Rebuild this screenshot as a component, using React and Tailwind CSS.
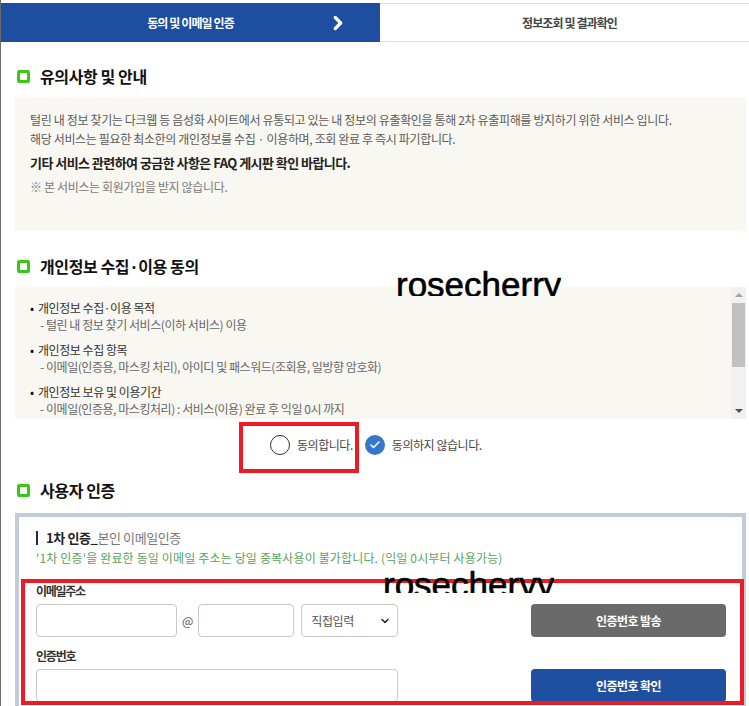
import { Check, ChevronRight, ChevronDown } from 'lucide-react';

const FONT = { fontFamily: '"Noto Sans CJK KR", "Noto Sans", sans-serif' };
const MARK = { fontFamily: '"Liberation Sans", Arial, sans-serif' };

// section heading with green square
const SectionTitle = ({ children, className = '' }) => (
  <div className={`flex items-center h-[22px] pl-[2px] ${className}`}>
    <span className="w-[13px] h-[13px] border-[3px] border-[#3dc51a] rounded-[2px]" />
    <h2 className="ml-[10px] text-[16px] font-bold text-[#111] tracking-[-0.4px]">{children}</h2>
  </div>
);

const consentItems = [
  { title: '개인정보 수집·이용 목적', lines: ['- 털린 내 정보 찾기 서비스(이하 서비스) 이용'] },
  { title: '개인정보 수집 항목', lines: ['- 이메일(인증용, 마스킹 처리), 아이디 및 패스워드(조회용, 일방향 암호화)'] },
  {
    title: '개인정보 보유 및 이용기간',
    lines: ['- 이메일(인증용, 마스킹처리) : 서비스(이용) 완료 후 익일 0시 까지', '- 아이디 및 패스워드(조회용, 일방향 암호화) : 조회 완료 후 즉시 파기'],
  },
  { title: '동의 거부 권리', lines: ['- 동의를 거부할 수 있으며, 거부 시 서비스 이용이 제한됩니다.'] },
];

export default function App() {
  return (
    <div className="relative w-[749px] min-h-[706px] bg-white border-l border-[#6b6b6b] overflow-hidden" style={FONT}>
      {/* Steps */}
      <div className="pt-[3px]">
        <div className="flex h-[39px]">
          <div className="w-[379px] bg-[#1e4e9f] flex items-center justify-center relative">
            <span className="text-white text-[12px] font-bold tracking-[-0.9px]">동의 및 이메일 인증</span>
            <ChevronRight className="absolute left-[326px] top-[9px] w-[22px] h-[22px] text-white" strokeWidth={3.5} />
          </div>
          <div className="flex-1 flex items-center justify-center pl-[10px] border-y border-[#dedede]">
            <span className="text-[#444] text-[12px] font-bold tracking-[-0.9px]">정보조회 및 결과확인</span>
          </div>
        </div>
      </div>

      <div className="pl-[14px] pr-[3px]">
        <SectionTitle className="mt-[23px]">유의사항 및 안내</SectionTitle>
        <div className="mt-[10px] h-[134px] bg-[#f9f7f1] pl-[15px] pt-[13px] text-[12px] leading-[19px] tracking-[-0.35px] text-[#5a5a5a]">
          <p>털린 내 정보 찾기는 다크웹 등 음성화 사이트에서 유통되고 있는 내 정보의 유출확인을 통해 2차 유출피해를 방지하기 위한 서비스 입니다.</p>
          <p>해당 서비스는 필요한 최소한의 개인정보를 수집 · 이용하며, 조회 완료 후 즉시 파기합니다.</p>
          <p className="mt-[5px] text-[13px] font-bold text-[#222] tracking-[-0.55px]">기타 서비스 관련하여 궁금한 사항은 FAQ 게시판 확인 바랍니다.</p>
          <p className="mt-[5px] text-[#7a7a7a]">※ 본 서비스는 회원가입을 받지 않습니다.</p>
        </div>

        <SectionTitle className="mt-[24px]">개인정보 수집·이용 동의</SectionTitle>
        <div className="mt-[10px] h-[132px] bg-[#f9f7f1] flex">
          <div className="flex-1 overflow-hidden pl-[15px] pt-[12px] text-[12px] leading-[17px] tracking-[-0.45px]">
            {consentItems.map((item, i) => (
              <div key={i} className={i > 0 ? 'mt-[8px]' : ''}>
                <div className="flex text-[#333]">
                  <span className="w-[8px] text-[#111]">•</span>
                  <span>{item.title}</span>
                </div>
                {item.lines.map((l, j) => (
                  <p key={j} className="pl-[10px] text-[#666]">{l}</p>
                ))}
              </div>
            ))}
          </div>
          {/* scrollbar */}
          <div className="w-[15px] bg-[#f1f1f1] flex flex-col items-center">
            <div className="h-[16px] flex items-center justify-center">
              <span className="w-0 h-0 border-x-[4px] border-x-transparent border-b-[4px] border-b-[#a3a3a3]" />
            </div>
            <div className="w-[13px] h-[64px] bg-[#c1c1c1]" />
            <div className="flex-1" />
            <div className="h-[16px] flex items-center justify-center">
              <span className="w-0 h-0 border-x-[4px] border-x-transparent border-t-[4px] border-t-[#505050]" />
            </div>
          </div>
        </div>

        {/* agree radios */}
        <div className="mt-[16px] h-[20px] flex items-center pl-[255px] text-[12px] tracking-[-0.45px] text-[#444]">
          <span className="w-[20px] h-[20px] rounded-full border-[1.5px] border-[#333] bg-white" />
          <span className="ml-[7px]">동의합니다.</span>
          <span className="ml-[12px] w-[20px] h-[20px] rounded-full bg-[#3677cc] flex items-center justify-center">
            <Check className="w-[12px] h-[12px] text-white" strokeWidth={3} />
          </span>
          <span className="ml-[7px]">동의하지 않습니다.</span>
        </div>

        <SectionTitle className="mt-[24px]">사용자 인증</SectionTitle>
        <div className="mt-[12px] border-[4px] border-[#c3cbdb] border-b-0 pl-[17px] pr-[16px] pt-[12px] pb-[10px]">
          <div className="flex items-center h-[18px]">
            <span className="w-[2px] h-[14px] bg-[#1b2a55]" />
            <span className="ml-[8px] text-[13px] font-bold text-[#222] tracking-[-0.4px]">1차 인증_</span>
            <span className="text-[13px] text-[#777] tracking-[-0.4px]">본인 이메일인증</span>
          </div>
          <p className="mt-[2px] text-[12px] leading-[18px] text-[#5aa25a] tracking-[0.15px]">'1차 인증'을 완료한 동일 이메일 주소는 당일 중복사용이 불가합니다. (익일 0시부터 사용가능)</p>

          <p className="mt-[15px] text-[12px] font-bold text-[#333] tracking-[-1.3px] leading-[18px]">이메일주소</p>
          <div className="mt-[4px] flex items-center h-[33px]">
            <input className="w-[141px] h-[33px] border border-[#c8c8c8] rounded-[4px] bg-white" />
            <span className="mx-[5px] text-[12px] text-[#555]">@</span>
            <input className="w-[96px] h-[33px] border border-[#c8c8c8] rounded-[4px] bg-white" />
            <div className="ml-[7px] w-[97px] h-[33px] border border-[#c8c8c8] rounded-[4px] flex items-center justify-between pl-[9px] pr-[6px] text-[12px] text-[#555] tracking-[-0.45px]">
              <span>직접입력</span>
              <ChevronDown className="w-[12px] h-[12px] text-[#222]" strokeWidth={3} />
            </div>
            <button className="ml-auto w-[195px] h-[33px] rounded-[4px] bg-[#6a6a6a] text-white text-[12px] font-bold tracking-[-0.55px]">인증번호 발송</button>
          </div>

          <p className="mt-[10px] text-[12px] font-bold text-[#333] tracking-[-1.2px] leading-[18px]">인증번호</p>
          <div className="mt-[4px] flex items-center h-[33px]">
            <input className="w-[362px] h-[33px] border border-[#c8c8c8] rounded-[4px] bg-white" />
            <button className="ml-auto w-[195px] h-[33px] rounded-[4px] bg-[#1f4fa0] text-white text-[12px] font-bold tracking-[-0.55px]">인증번호 확인</button>
          </div>
        </div>
      </div>

      {/* overlays: annotations */}
      <div className="absolute left-[395px] top-[266px] h-[30px] overflow-hidden">
        <span className="block text-[35px] leading-[38px] text-black [-webkit-text-stroke:0.6px_black]" style={MARK}>rosecherry</span>
      </div>
      <div className="absolute left-[238px] top-[422px] w-[120px] h-[51px] border-[4px] border-[#ed1c24]" />
      <div className="absolute left-[20px] top-[579px] w-[723px] h-[126px] border-[4px] border-[#ed1c24]" />
      <div className="absolute left-[382px] top-[566px] h-[27px] overflow-hidden">
        <span className="block text-[35px] leading-[38px] text-black [-webkit-text-stroke:0.6px_black]" style={MARK}>rosecheryy</span>
      </div>
    </div>
  );
}
